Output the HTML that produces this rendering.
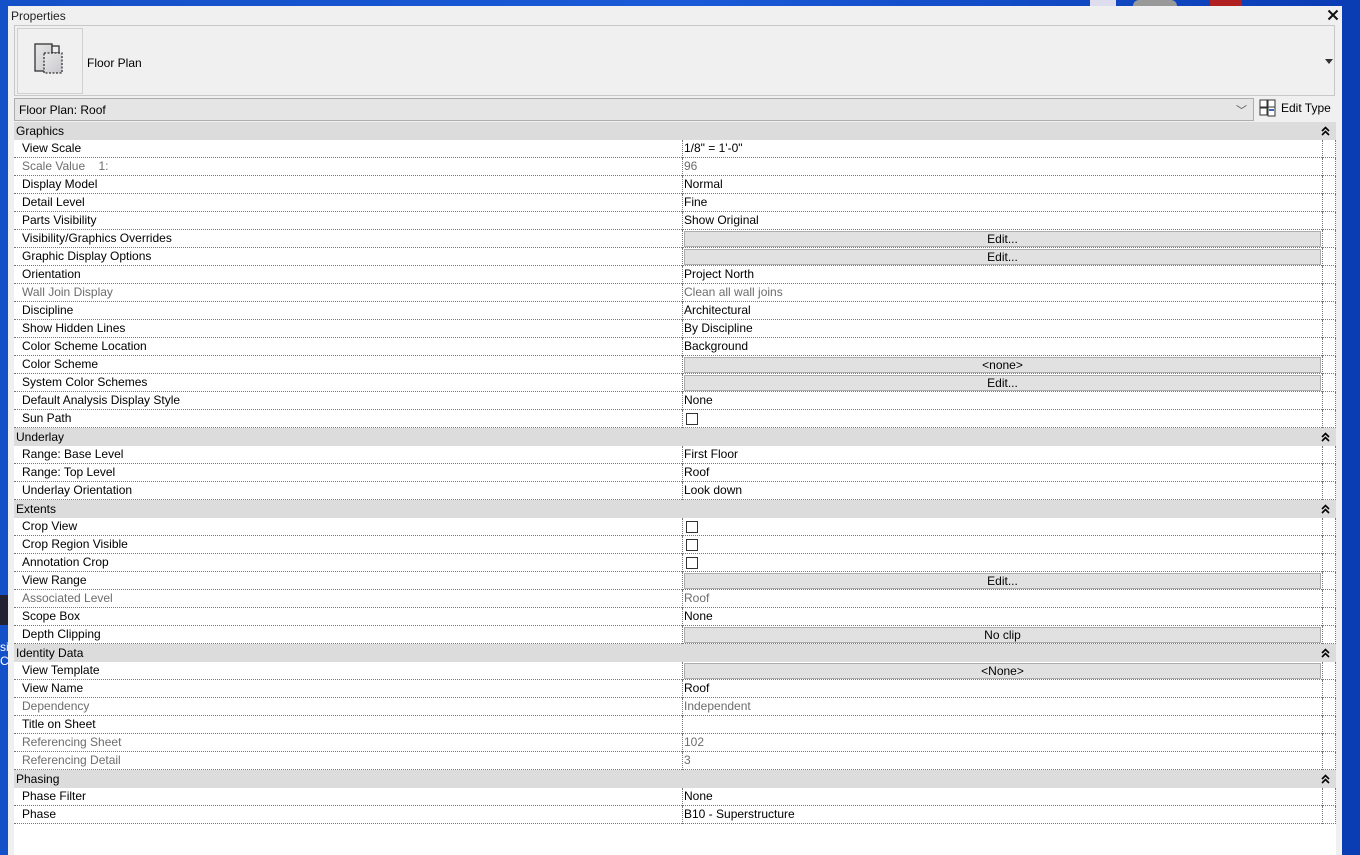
<!DOCTYPE html>
<html><head><meta charset="utf-8"><style>
*{box-sizing:border-box;margin:0;padding:0}
body{width:1360px;height:855px;overflow:hidden;background:linear-gradient(90deg,#1450c8,#1a5ad8 50%,#0a3cb4);font-family:"Liberation Sans",sans-serif;font-size:12px;color:#000;position:relative}
#panel{position:absolute;left:8px;top:6px;width:1334px;height:849px;background:#f0f0f0;overflow:hidden}
.title{position:absolute;left:3px;top:3px;font-size:12px;color:#222}
.close{position:absolute;left:1319px;top:3px}
.typebox{position:absolute;left:6px;top:19px;width:1321px;height:71px;border:1px solid #c8c8c8;background:#f0f0f0}
.icon{position:absolute;left:2px;top:2px;width:66px;height:66px;border:1px solid #d0d0d0}
.tname{position:absolute;left:72px;top:30px}
.tri{position:absolute;right:1px;top:33px;border-left:4px solid transparent;border-right:4px solid transparent;border-top:5px solid #333}
.dd{position:absolute;left:6px;top:92px;width:1240px;height:23px;border:1px solid #adadad;background:#e5e5e5}
.dd span{position:absolute;left:4px;top:4px}
.dd i{position:absolute;right:6px;top:3px;font-style:normal;color:#555;font-size:11px}
.et{position:absolute;left:1251px;top:93px;}
.et span{position:absolute;left:22px;top:2px;width:60px}
#grid{position:absolute;left:6px;top:116px;width:1322px}
.h{height:18px;background:#dcdcdc;position:relative;padding-left:2px;line-height:18px}
.h svg{position:absolute;left:1307px;top:4px}
.r{height:18px;position:relative;background:#fff;border-bottom:1px dotted #777;line-height:17px}
.r .l{position:absolute;left:8px;top:0}
.r .v{position:absolute;left:668px;top:0;width:641px;height:18px;border-left:1px dotted #777;padding-left:1px;border-right:1px dotted #777}
.r .e{position:absolute;left:1309px;top:0;width:13px;height:18px;border-right:1px dotted #777}
.g{color:#6d6d6d}
.btn{position:absolute;left:1px;top:1px;right:1px;height:16px;background:#e1e1e1;border:1px solid #adadad;text-align:center;line-height:14px;font-size:12px}
.cb{position:absolute;left:3px;top:3px;width:12px;height:12px;border:1px solid #333;background:#fff}
</style></head><body>
<div style="position:absolute;left:1090px;top:0;width:26px;height:6px;background:#dde"></div>
<div style="position:absolute;left:1133px;top:0;width:44px;height:6px;background:#999;border-radius:6px 6px 0 0"></div>
<div style="position:absolute;left:1210px;top:0;width:32px;height:6px;background:#b02020"></div>
<div style="position:absolute;left:0;top:595px;width:8px;height:30px;background:#223"></div>
<div style="position:absolute;left:0;top:640px;color:#fff;font-size:12px;line-height:14px">si<br>C</div>
<div id="panel">
<div class="title">Properties</div>
<svg class="close" width="12" height="12" viewBox="0 0 12 12"><path d="M1.5 1.5L10.5 10.5M10.5 1.5L1.5 10.5" stroke="#111" stroke-width="2"/></svg>
<div class="typebox">
<div class="icon"><svg width="66" height="66" viewBox="0 0 66 66">
<defs><linearGradient id="gg" x1="0" y1="0" x2="1" y2="1"><stop offset="0" stop-color="#e8e8ea"/><stop offset="1" stop-color="#c8c8cc"/></linearGradient></defs>
<rect x="17" y="15" width="17" height="27" fill="url(#gg)" stroke="#333" stroke-width="1.3"/>
<rect x="34" y="17" width="7" height="7" fill="#eee" stroke="#333" stroke-width="1.3"/>
<rect x="26" y="24" width="18" height="20" fill="url(#gg)" stroke="#333" stroke-width="1.3" stroke-dasharray="2 1.5"/>
</svg></div>
<div class="tname">Floor Plan</div>
<div class="tri"></div>
</div>
<div class="dd"><span>Floor Plan: Roof</span><i>﹀</i></div>
<div class="et"><svg width="18" height="18" viewBox="0 0 18 18"><rect x="1" y="1" width="7" height="7" fill="#fff" stroke="#333"/><rect x="9" y="1" width="7" height="7" fill="#fff" stroke="#333"/><rect x="1" y="9" width="7" height="7" fill="#fff" stroke="#333"/><rect x="9" y="8" width="7" height="9" fill="#fff" stroke="#333"/><rect x="10" y="10" width="5" height="2" fill="#3a6ab0"/></svg><span>Edit Type</span></div>
<div id="grid">
<div class="h">Graphics<svg width="9" height="10" viewBox="0 0 9 10"><path d="M1 5L4.5 1.5L8 5M1 9L4.5 5.5L8 9" fill="none" stroke="#000" stroke-width="1.6"/></svg></div>
<div class="r"><span class="l">View Scale</span><div class="v">1/8" = 1'-0"</div><div class="e"></div></div>
<div class="r"><span class="l g">Scale Value &nbsp;&nbsp;&nbsp;1:</span><div class="v g">96</div><div class="e"></div></div>
<div class="r"><span class="l">Display Model</span><div class="v">Normal</div><div class="e"></div></div>
<div class="r"><span class="l">Detail Level</span><div class="v">Fine</div><div class="e"></div></div>
<div class="r"><span class="l">Parts Visibility</span><div class="v">Show Original</div><div class="e"></div></div>
<div class="r"><span class="l">Visibility/Graphics Overrides</span><div class="v"><div class="btn">Edit...</div></div><div class="e"></div></div>
<div class="r"><span class="l">Graphic Display Options</span><div class="v"><div class="btn">Edit...</div></div><div class="e"></div></div>
<div class="r"><span class="l">Orientation</span><div class="v">Project North</div><div class="e"></div></div>
<div class="r"><span class="l g">Wall Join Display</span><div class="v g">Clean all wall joins</div><div class="e"></div></div>
<div class="r"><span class="l">Discipline</span><div class="v">Architectural</div><div class="e"></div></div>
<div class="r"><span class="l">Show Hidden Lines</span><div class="v">By Discipline</div><div class="e"></div></div>
<div class="r"><span class="l">Color Scheme Location</span><div class="v">Background</div><div class="e"></div></div>
<div class="r"><span class="l">Color Scheme</span><div class="v"><div class="btn">&lt;none&gt;</div></div><div class="e"></div></div>
<div class="r"><span class="l">System Color Schemes</span><div class="v"><div class="btn">Edit...</div></div><div class="e"></div></div>
<div class="r"><span class="l">Default Analysis Display Style</span><div class="v">None</div><div class="e"></div></div>
<div class="r"><span class="l">Sun Path</span><div class="v"><div class="cb"></div></div><div class="e"></div></div>
<div class="h">Underlay<svg width="9" height="10" viewBox="0 0 9 10"><path d="M1 5L4.5 1.5L8 5M1 9L4.5 5.5L8 9" fill="none" stroke="#000" stroke-width="1.6"/></svg></div>
<div class="r"><span class="l">Range: Base Level</span><div class="v">First Floor</div><div class="e"></div></div>
<div class="r"><span class="l">Range: Top Level</span><div class="v">Roof</div><div class="e"></div></div>
<div class="r"><span class="l">Underlay Orientation</span><div class="v">Look down</div><div class="e"></div></div>
<div class="h">Extents<svg width="9" height="10" viewBox="0 0 9 10"><path d="M1 5L4.5 1.5L8 5M1 9L4.5 5.5L8 9" fill="none" stroke="#000" stroke-width="1.6"/></svg></div>
<div class="r"><span class="l">Crop View</span><div class="v"><div class="cb"></div></div><div class="e"></div></div>
<div class="r"><span class="l">Crop Region Visible</span><div class="v"><div class="cb"></div></div><div class="e"></div></div>
<div class="r"><span class="l">Annotation Crop</span><div class="v"><div class="cb"></div></div><div class="e"></div></div>
<div class="r"><span class="l">View Range</span><div class="v"><div class="btn">Edit...</div></div><div class="e"></div></div>
<div class="r"><span class="l g">Associated Level</span><div class="v g">Roof</div><div class="e"></div></div>
<div class="r"><span class="l">Scope Box</span><div class="v">None</div><div class="e"></div></div>
<div class="r"><span class="l">Depth Clipping</span><div class="v"><div class="btn">No clip</div></div><div class="e"></div></div>
<div class="h">Identity Data<svg width="9" height="10" viewBox="0 0 9 10"><path d="M1 5L4.5 1.5L8 5M1 9L4.5 5.5L8 9" fill="none" stroke="#000" stroke-width="1.6"/></svg></div>
<div class="r"><span class="l">View Template</span><div class="v"><div class="btn">&lt;None&gt;</div></div><div class="e"></div></div>
<div class="r"><span class="l">View Name</span><div class="v">Roof</div><div class="e"></div></div>
<div class="r"><span class="l g">Dependency</span><div class="v g">Independent</div><div class="e"></div></div>
<div class="r"><span class="l">Title on Sheet</span><div class="v"></div><div class="e"></div></div>
<div class="r"><span class="l g">Referencing Sheet</span><div class="v g">102</div><div class="e"></div></div>
<div class="r"><span class="l g">Referencing Detail</span><div class="v g">3</div><div class="e"></div></div>
<div class="h">Phasing<svg width="9" height="10" viewBox="0 0 9 10"><path d="M1 5L4.5 1.5L8 5M1 9L4.5 5.5L8 9" fill="none" stroke="#000" stroke-width="1.6"/></svg></div>
<div class="r"><span class="l">Phase Filter</span><div class="v">None</div><div class="e"></div></div>
<div class="r"><span class="l">Phase</span><div class="v">B10 - Superstructure</div><div class="e"></div></div>
<div style="background:#fff;height:40px"></div>
</div>
</div>
</body></html>
